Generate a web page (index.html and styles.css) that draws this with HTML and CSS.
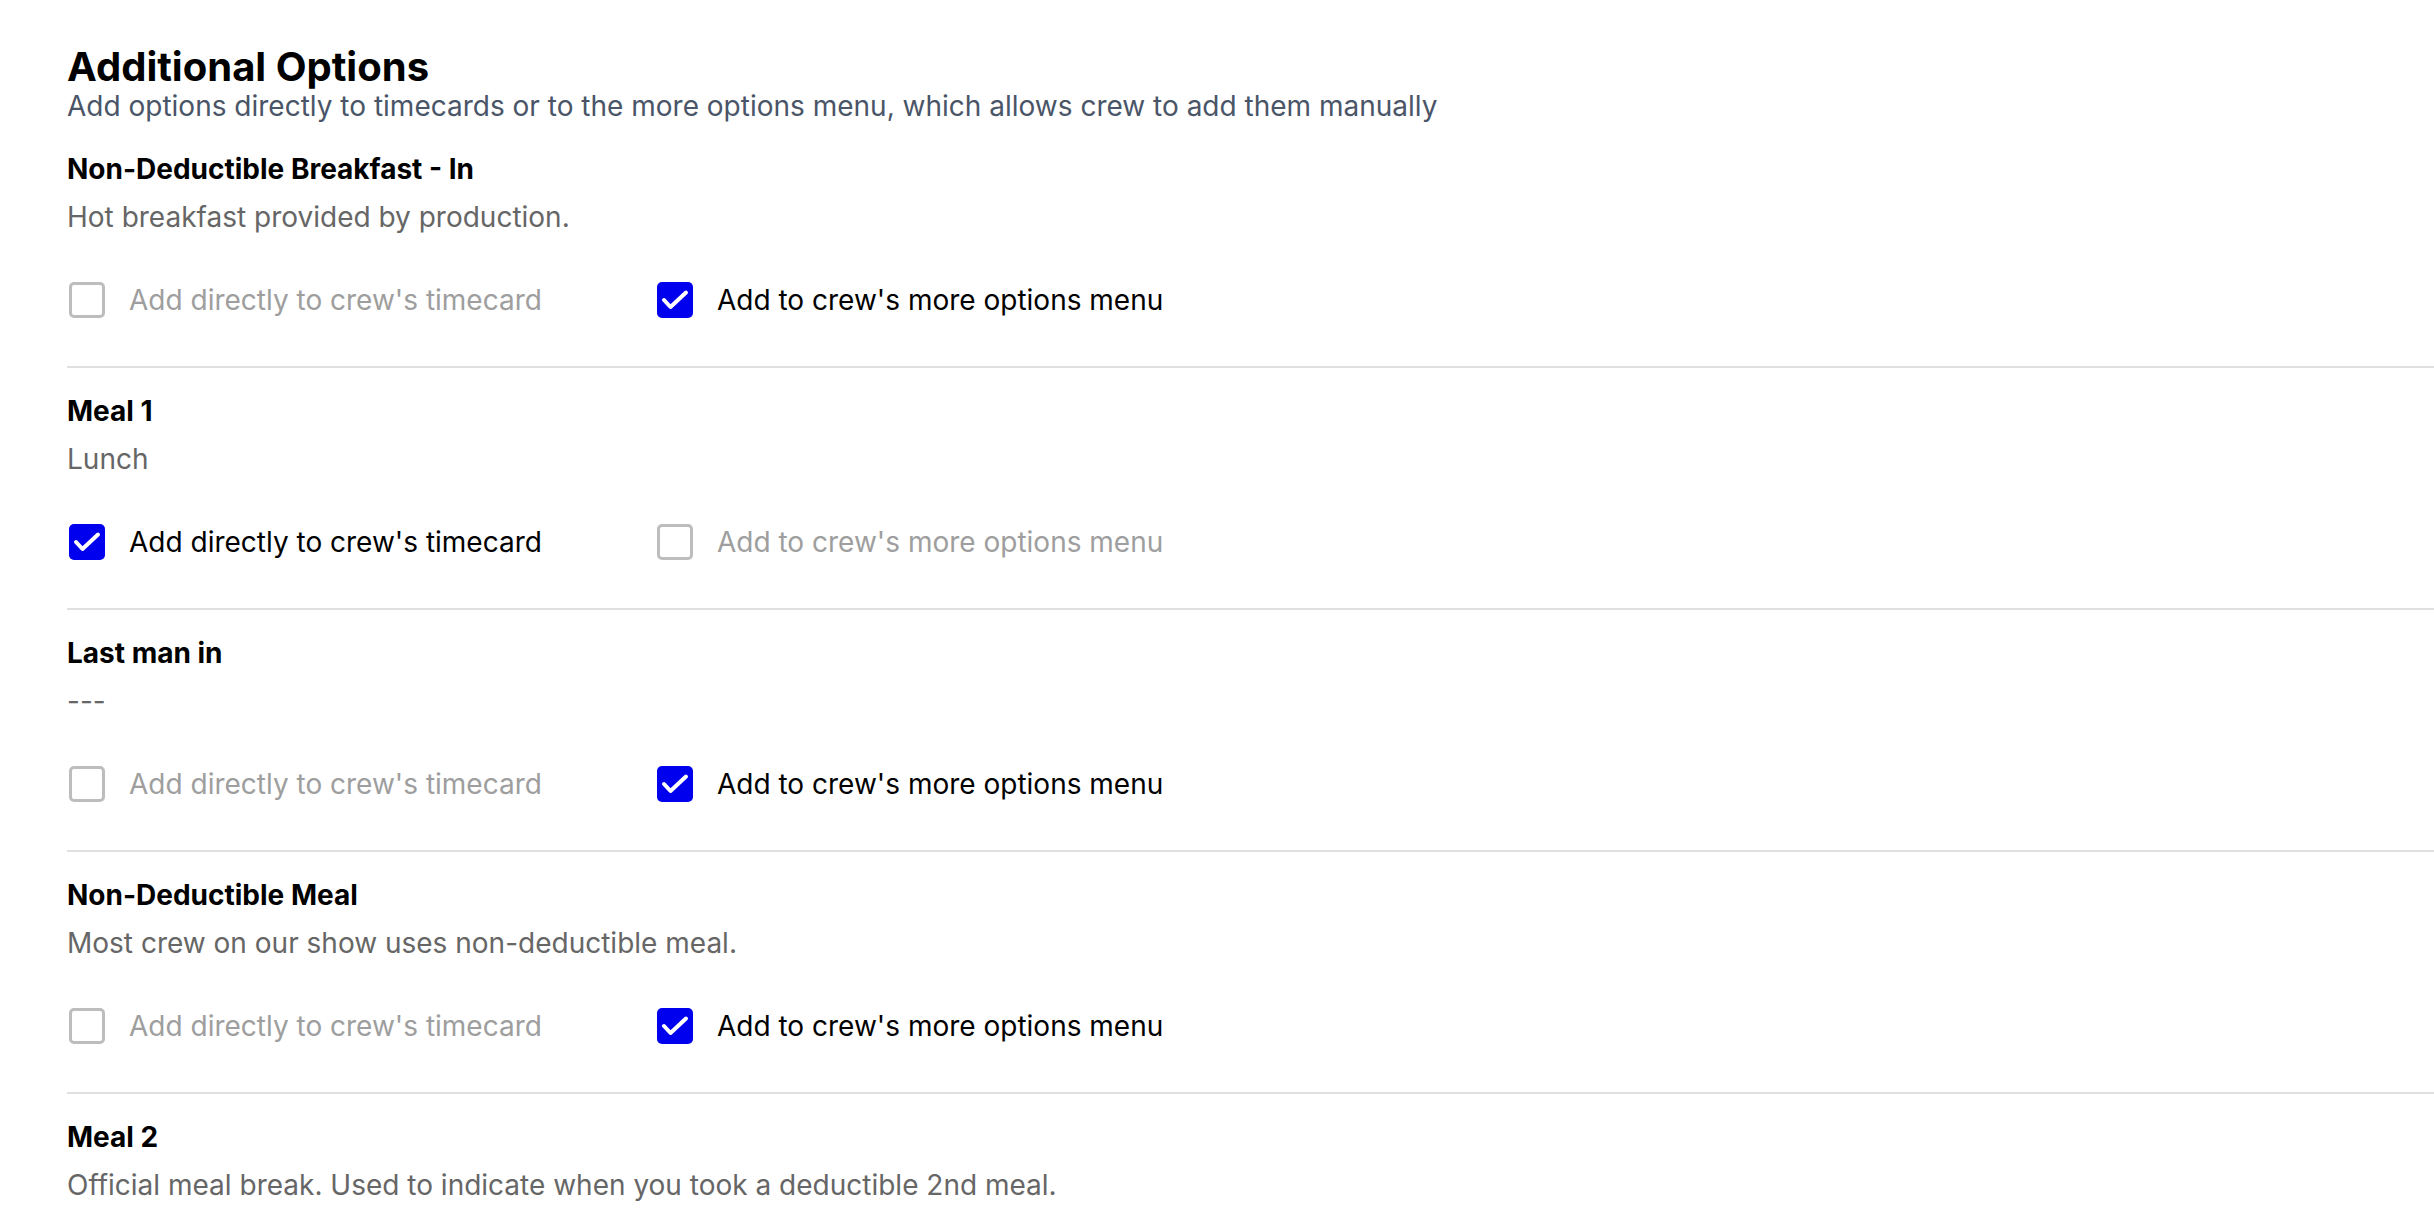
FILE: index.html
```html
<!DOCTYPE html>
<html lang="en">
<head>
    <meta charset="UTF-8">
    <meta name="viewport" content="width=device-width, initial-scale=1.0">
    <title>Additional Options</title>
    <link rel="stylesheet" href="styles.css">
</head>
<body>
    <div class="page">
        <h1 class="page-title">Additional Options</h1>
        <p class="page-subtitle">Add options directly to timecards or to the more options menu, which allows crew to add them manually</p>

        <div class="option-list">
            <div class="option">
                <div class="option-name">Non-Deductible Breakfast - In</div>
                <div class="option-desc">Hot breakfast provided by production.</div>
                <div class="option-checks">
                    <label class="check">
                        <span class="box"></span>
                        <span class="check-label">Add directly to crew's timecard</span>
                    </label>
                    <label class="check checked">
                        <span class="box"><svg viewBox="0 0 36 36"><polyline points="7,18 13.5,25 29,10.5"/></svg></span>
                        <span class="check-label">Add to crew's more options menu</span>
                    </label>
                </div>
            </div>

            <div class="option">
                <div class="option-name">Meal 1</div>
                <div class="option-desc">Lunch</div>
                <div class="option-checks">
                    <label class="check checked">
                        <span class="box"><svg viewBox="0 0 36 36"><polyline points="7,18 13.5,25 29,10.5"/></svg></span>
                        <span class="check-label">Add directly to crew's timecard</span>
                    </label>
                    <label class="check">
                        <span class="box"></span>
                        <span class="check-label">Add to crew's more options menu</span>
                    </label>
                </div>
            </div>

            <div class="option">
                <div class="option-name">Last man in</div>
                <div class="option-desc">---</div>
                <div class="option-checks">
                    <label class="check">
                        <span class="box"></span>
                        <span class="check-label">Add directly to crew's timecard</span>
                    </label>
                    <label class="check checked">
                        <span class="box"><svg viewBox="0 0 36 36"><polyline points="7,18 13.5,25 29,10.5"/></svg></span>
                        <span class="check-label">Add to crew's more options menu</span>
                    </label>
                </div>
            </div>

            <div class="option">
                <div class="option-name">Non-Deductible Meal</div>
                <div class="option-desc">Most crew on our show uses non-deductible meal.</div>
                <div class="option-checks">
                    <label class="check">
                        <span class="box"></span>
                        <span class="check-label">Add directly to crew's timecard</span>
                    </label>
                    <label class="check checked">
                        <span class="box"><svg viewBox="0 0 36 36"><polyline points="7,18 13.5,25 29,10.5"/></svg></span>
                        <span class="check-label">Add to crew's more options menu</span>
                    </label>
                </div>
            </div>

            <div class="option">
                <div class="option-name">Meal 2</div>
                <div class="option-desc">Official meal break. Used to indicate when you took a deductible 2nd meal.</div>
            </div>
        </div>
    </div>
</body>
</html>
```

FILE: styles.css
```css
* {
    margin: 0;
    padding: 0;
    box-sizing: border-box;
}

body {
    background-color: #fff;
    font-family: Inter, "Noto Sans", sans-serif;
    color: #000;
    overflow: hidden;
}

.page {
    padding: 43px 0 0 67px;
}

.page-title {
    font-size: 40px;
    line-height: 48px;
    font-weight: 700;
}

.page-subtitle {
    font-size: 28px;
    line-height: 30px;
    color: #4a5568;
}

.option-list {
    margin-top: 5px;
}

.option {
    padding: 25px 0 48px;
    border-bottom: 2px solid #e0e0e0;
}

.option:last-child {
    border-bottom: none;
}

.option-name {
    font-size: 28px;
    line-height: 36px;
    font-weight: 700;
}

.option-desc {
    margin-top: 12px;
    font-size: 28px;
    line-height: 36px;
    color: #666;
}

.option-checks {
    display: flex;
    margin-top: 47px;
}

.check {
    display: flex;
    align-items: center;
    width: 588px;
    cursor: pointer;
}

.box {
    width: 36px;
    height: 36px;
    margin-left: 2px;
    border: 3px solid #bdbdbd;
    border-radius: 5px;
    background-color: #fff;
    flex-shrink: 0;
}

.box svg {
    display: block;
    width: 100%;
    height: 100%;
}

.box polyline {
    fill: none;
    stroke: #fff;
    stroke-width: 4;
    stroke-linecap: round;
    stroke-linejoin: round;
}

.check-label {
    margin-left: 24px;
    font-size: 28px;
    line-height: 36px;
    color: #9e9e9e;
}

.check.checked .box {
    border: none;
    background-color: #0000ee;
}

.check.checked .check-label {
    color: #000;
}
```
